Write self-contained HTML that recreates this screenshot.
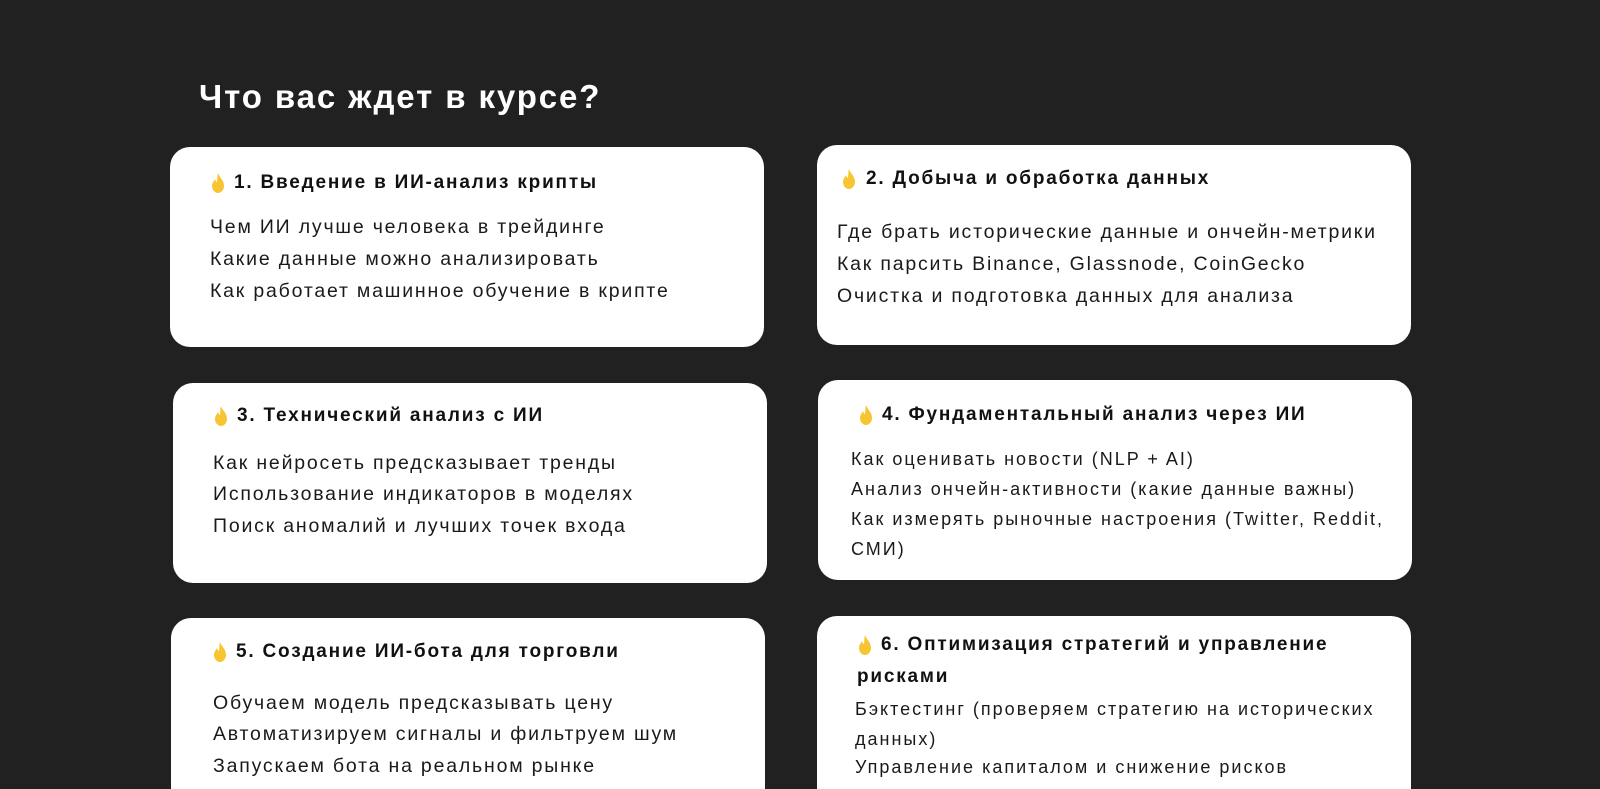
<!DOCTYPE html>
<html><head><meta charset="utf-8"><style>
html{margin:0;padding:0;height:789px;overflow:hidden;}
body{margin:0;padding:0;width:1600px;height:789px;background:#212121;position:relative;overflow:hidden;font-family:"Liberation Sans","Noto Sans CJK SC",sans-serif;}
.h{position:absolute;left:199px;top:76px;color:#fff;font-weight:bold;font-size:33px;letter-spacing:1.9px;line-height:42px;white-space:nowrap;}
.c{position:absolute;width:594px;height:200px;background:#fff;border-radius:20px;}
.t,.l,.s{position:absolute;white-space:nowrap;color:#111;}
.t{font-weight:bold;font-size:19px;letter-spacing:1.8px;line-height:26px;}
.l{font-size:19.5px;letter-spacing:1.8px;line-height:26px;color:#1a1a1a;}
.s{font-size:18px;letter-spacing:2px;line-height:26px;color:#1a1a1a;}
.f{position:absolute;width:16px;height:22px;}
</style></head><body>
<div class="h">Что вас ждет в курсе?</div>

<div class="c" style="left:170px;top:147px"></div>
<div class="c" style="left:817px;top:145px"></div>
<div class="c" style="left:173px;top:383px"></div>
<div class="c" style="left:818px;top:380px"></div>
<div class="c" style="left:171px;top:618px;height:171px;border-radius:20px 20px 0 0"></div>
<div class="c" style="left:817px;top:616px;height:173px;border-radius:20px 20px 0 0"></div>

<svg width="0" height="0" style="position:absolute"><defs><symbol id="fire" viewBox="0 0 16 22"><path d="M8 1C9 5 14 8 14 14C14 18 11 21 8 21C5 21 2 18 2 14C2 11 4 9 5 7C5.5 9 6.5 10 7 10C7.5 7 7 4 8 1Z" fill="#f7c531"/></symbol></defs></svg>

<svg class="f" style="left:210px;top:172px"><use href="#fire"/></svg>
<div class="t" style="left:234px;top:170px">1. Введение в ИИ-анализ крипты</div>
<div class="l" style="left:210px;top:214px">Чем ИИ лучше человека в трейдинге</div>
<div class="l" style="left:210px;top:246px">Какие данные можно анализировать</div>
<div class="l" style="left:210px;top:278px">Как работает машинное обучение в крипте</div>

<svg class="f" style="left:841px;top:168px"><use href="#fire"/></svg>
<div class="t" style="left:866px;top:166px">2. Добыча и обработка данных</div>
<div class="l" style="left:837px;top:219px">Где брать исторические данные и ончейн-метрики</div>
<div class="l" style="left:837px;top:251px">Как парсить Binance, Glassnode, CoinGecko</div>
<div class="l" style="left:837px;top:283px">Очистка и подготовка данных для анализа</div>

<svg class="f" style="left:213px;top:405px"><use href="#fire"/></svg>
<div class="t" style="left:237px;top:403px">3. Технический анализ с ИИ</div>
<div class="l" style="left:213px;top:450px">Как нейросеть предсказывает тренды</div>
<div class="l" style="left:213px;top:481px">Использование индикаторов в моделях</div>
<div class="l" style="left:213px;top:513px">Поиск аномалий и лучших точек входа</div>

<svg class="f" style="left:858px;top:404px"><use href="#fire"/></svg>
<div class="t" style="left:882px;top:402px">4. Фундаментальный анализ через ИИ</div>
<div class="s" style="left:851px;top:446px">Как оценивать новости (NLP + AI)</div>
<div class="s" style="left:851px;top:476px">Анализ ончейн-активности (какие данные важны)</div>
<div class="s" style="left:851px;top:506px">Как измерять рыночные настроения (Twitter, Reddit,</div>
<div class="s" style="left:851px;top:536px">СМИ)</div>

<svg class="f" style="left:212px;top:641px"><use href="#fire"/></svg>
<div class="t" style="left:236px;top:639px">5. Создание ИИ-бота для торговли</div>
<div class="l" style="left:213px;top:690px">Обучаем модель предсказывать цену</div>
<div class="l" style="left:213px;top:721px">Автоматизируем сигналы и фильтруем шум</div>
<div class="l" style="left:213px;top:753px">Запускаем бота на реальном рынке</div>

<svg class="f" style="left:857px;top:634px"><use href="#fire"/></svg>
<div class="t" style="left:881px;top:632px">6. Оптимизация стратегий и управление</div>
<div class="t" style="left:857px;top:664px">рисками</div>
<div class="s" style="left:855px;top:696px">Бэктестинг (проверяем стратегию на исторических</div>
<div class="s" style="left:855px;top:726px">данных)</div>
<div class="s" style="left:855px;top:754px">Управление капиталом и снижение рисков</div>
</body></html>
